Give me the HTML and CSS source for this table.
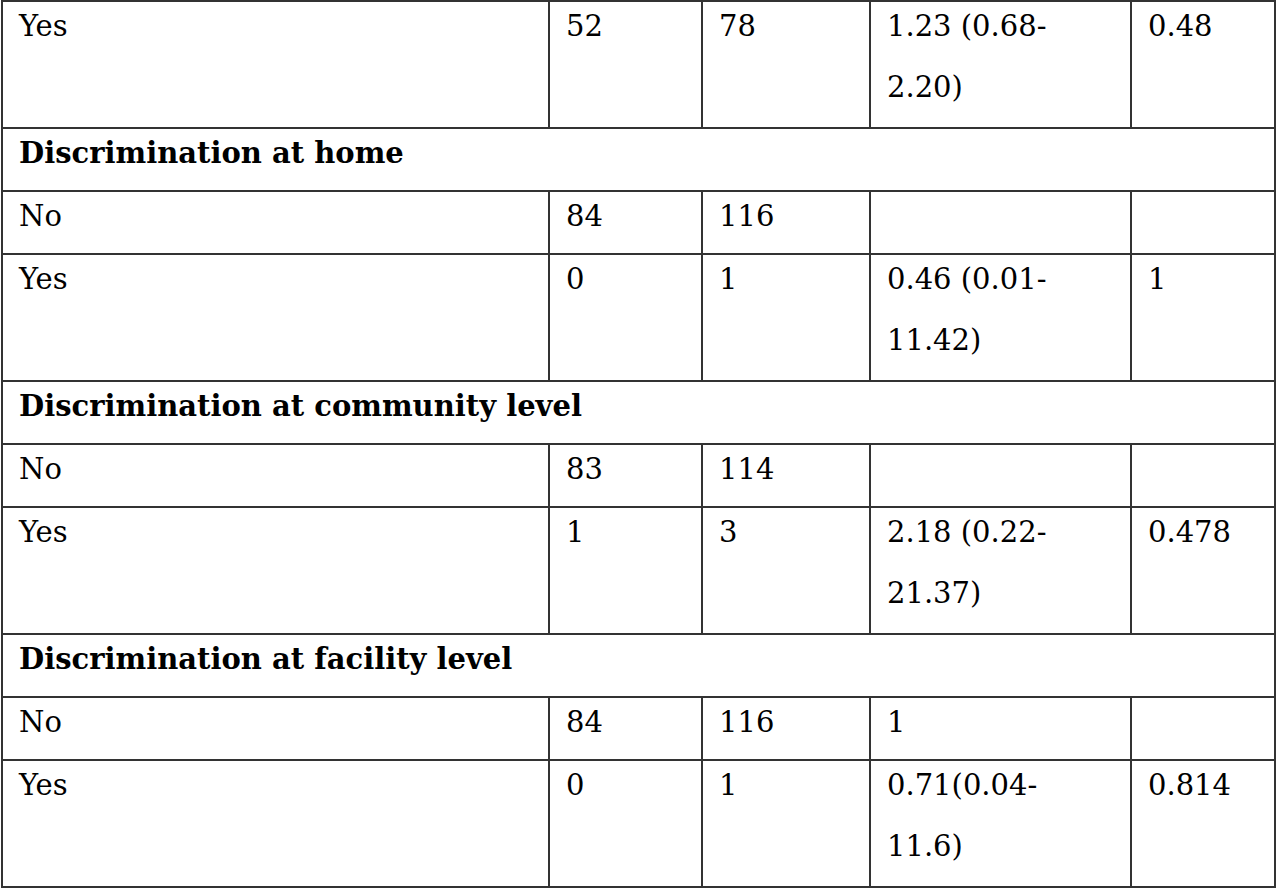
FILE: index.html
```html
<!DOCTYPE html>
<html>
<head>
<meta charset="utf-8">
<link rel="stylesheet" href="styles.css">
</head>
<body>
<table class="data">
  <colgroup>
    <col class="c-label">
    <col class="c-a">
    <col class="c-b">
    <col class="c-or">
    <col class="c-p">
  </colgroup>
  <tbody>
    <tr class="tall"><td><div class="txt">Yes</div></td><td><div class="txt">52</div></td><td><div class="txt">78</div></td><td><div class="txt">1.23 (0.68-<br>2.20)</div></td><td><div class="txt">0.48</div></td></tr>
    <tr class="group"><td colspan="5"><div class="txt">Discrimination at home</div></td></tr>
    <tr><td><div class="txt">No</div></td><td><div class="txt">84</div></td><td><div class="txt">116</div></td><td></td><td></td></tr>
    <tr class="tall"><td><div class="txt">Yes</div></td><td><div class="txt">0</div></td><td><div class="txt">1</div></td><td><div class="txt">0.46 (0.01-<br>11.42)</div></td><td><div class="txt">1</div></td></tr>
    <tr class="group"><td colspan="5"><div class="txt">Discrimination at community level</div></td></tr>
    <tr><td><div class="txt">No</div></td><td><div class="txt">83</div></td><td><div class="txt">114</div></td><td></td><td></td></tr>
    <tr class="tall"><td><div class="txt">Yes</div></td><td><div class="txt">1</div></td><td><div class="txt">3</div></td><td><div class="txt">2.18 (0.22-<br>21.37)</div></td><td><div class="txt">0.478</div></td></tr>
    <tr class="group"><td colspan="5"><div class="txt">Discrimination at facility level</div></td></tr>
    <tr><td><div class="txt">No</div></td><td><div class="txt">84</div></td><td><div class="txt">116</div></td><td><div class="txt">1</div></td><td></td></tr>
    <tr class="tall"><td><div class="txt">Yes</div></td><td><div class="txt">0</div></td><td><div class="txt">1</div></td><td><div class="txt">0.71(0.04-<br>11.6)</div></td><td><div class="txt">0.814</div></td></tr>
  </tbody>
</table>
</body>
</html>
```
FILE: styles.css
```css
html, body {
  margin: 0;
  padding: 0;
  background: #ffffff;
}

.data {
  margin-left: 1px;
  width: 1275px;
  table-layout: fixed;
  border-collapse: collapse;
  font-family: "DejaVu Serif", "Liberation Serif", serif;
  font-size: 29px;
  line-height: 61px;
  color: #000000;
}

.c-label { width: 547px; }
.c-a { width: 153px; }
.c-b { width: 168px; }
.c-or { width: 261px; }
.c-p { width: 144px; }

.data td {
  height: 61px;
  border: 2px solid #333333;
  padding: 0 8px 0 16px;
  vertical-align: top;
  white-space: nowrap;
}

.data tr.tall td {
  padding-bottom: 3px;
}

.data .txt {
  margin: -6px 0 6px;
}

.data tr.group td {
  font-weight: bold;
}
```
